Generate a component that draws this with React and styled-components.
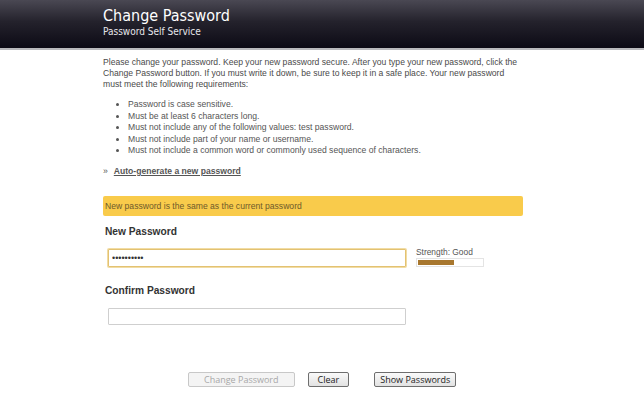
import React from 'react'
import styled, { createGlobalStyle } from 'styled-components'

const GlobalStyle = createGlobalStyle`
  html, body {
    margin: 0;
    padding: 0;
    background: #fff;
  }
  body {
    font-family: 'Liberation Sans', Arial, sans-serif;
  }
`

const Header = styled.header`
  height: 50px;
  background: linear-gradient(180deg, #4a4853 0%, #24222c 45%, #0c0a15 100%);
  border-bottom: 2px solid #b9b9bd;
  padding: 5px 0 0 103px;
  box-sizing: border-box;
  color: #fff;
`

const Title = styled.h1`
  margin: 0;
  font-family: 'DejaVu Sans Condensed', 'Open Sans', sans-serif;
  font-stretch: condensed;
  font-weight: normal;
  font-size: 16px;
  line-height: 21px;
`

const Subtitle = styled.div`
  font-family: 'DejaVu Sans Condensed', 'Open Sans', sans-serif;
  font-stretch: condensed;
  font-size: 10px;
  line-height: 12px;
  color: #e6e6ea;
`

const Main = styled.main`
  padding: 7px 0 0 103px;
  width: 525px;
  box-sizing: border-box;
  color: #4a4a4a;
  font-size: 8.6px;
`

const Intro = styled.p`
  margin: 0;
  line-height: 11px;
  width: 420px;
`

const Rules = styled.ul`
  margin: 9px 0 0;
  padding-left: 25px;
  line-height: 11.6px;
  color: #555;
`

const AutoLink = styled.div`
  margin-top: 9px;
  font-weight: bold;
  color: #555;
  span {
    margin-right: 6px;
    font-weight: normal;
  }
  a {
    color: #555;
    text-decoration: underline;
  }
`

const Notice = styled.div`
  margin-top: 20px;
  width: 420px;
  height: 20px;
  box-sizing: border-box;
  background: #f9cb4b;
  border-radius: 2px;
  padding-left: 2px;
  line-height: 20px;
  color: #6e5a2a;
`

const Label = styled.div`
  margin: ${(p) => p.$top}px 0 0 2px;
  font-size: 10.2px;
  font-weight: bold;
  color: #333;
`

const FieldRow = styled.div`
  display: flex;
  align-items: flex-start;
  gap: 10px;
  margin: ${(p) => p.$top}px 0 0 5px;
`

const Input = styled.input`
  width: 298px;
  height: ${(p) => p.$h}px;
  box-sizing: border-box;
  border: 1px solid ${(p) => (p.$focus ? '#e3c272' : '#cfcfcf')};
  box-shadow: ${(p) => (p.$focus ? '0 0 0 1px #f1dca4' : 'none')};
  border-radius: 1px;
  padding: 0 3px;
  font-size: 9px;
  color: #333;
  background: #fff;
  outline: none;
`

const Strength = styled.div`
  display: flex;
  flex-direction: column;
  gap: 1px;
  margin-top: -2px;
  font-size: 8.4px;
  color: #555;
`

const Bar = styled.div`
  width: 68px;
  height: 9px;
  box-sizing: border-box;
  border: 1px solid #e4e4e4;
  background: #fff;
  padding: 1px;
  div {
    height: 100%;
    background: #a8772e;
  }
`

const Buttons = styled.div`
  display: flex;
  gap: 13px;
  margin: 47px 0 0 85px;
`

const Button = styled.button`
  height: 15px;
  padding: 0 ${(p) => p.$pad}px;
  font-family: 'Open Sans', 'DejaVu Sans', sans-serif;
  font-size: 9px;
  line-height: 13px;
  color: ${(p) => (p.disabled ? '#a8a8a8' : '#222')};
  background: ${(p) =>
    p.disabled ? '#f4f4f4' : 'linear-gradient(180deg, #fafafa 0%, #e2e2e2 100%)'};
  border: 1px solid ${(p) => (p.disabled ? '#c8c8c8' : '#6e6e6e')};
  border-radius: 2px;
  margin-left: ${(p) => p.$gap || 0}px;
`

const rules = [
  'Password is case sensitive.',
  'Must be at least 6 characters long.',
  'Must not include any of the following values: test password.',
  'Must not include part of your name or username.',
  'Must not include a common word or commonly used sequence of characters.',
]

const App = () => {
  return (
    <>
      <GlobalStyle />
      <Header>
        <Title>Change Password</Title>
        <Subtitle>Password Self Service</Subtitle>
      </Header>
      <Main>
        <Intro>
          Please change your password. Keep your new password secure. After you type your new
          password, click the Change Password button. If you must write it down, be sure to keep
          it in a safe place. Your new password must meet the following requirements:
        </Intro>
        <Rules>
          {rules.map((r) => (
            <li key={r}>{r}</li>
          ))}
        </Rules>
        <AutoLink>
          <span>»</span>
          <a href='#'>Auto-generate a new password</a>
        </AutoLink>
        <Notice>New password is the same as the current password</Notice>

        {/* new password */}
        <Label $top={10}>New Password</Label>
        <FieldRow $top={12}>
          <Input type='password' defaultValue='password12' $focus $h={18} />
          <Strength>
            <span>Strength: Good</span>
            <Bar>
              <div style={{ width: '56%' }} />
            </Bar>
          </Strength>
        </FieldRow>

        {/* confirm password */}
        <Label $top={18}>Confirm Password</Label>
        <FieldRow $top={12}>
          <Input type='password' $h={17} />
        </FieldRow>

        <Buttons>
          <Button disabled $pad={15}>
            Change Password
          </Button>
          <Button $pad={9}>Clear</Button>
          <Button $pad={5} $gap={12}>
            Show Passwords
          </Button>
        </Buttons>
      </Main>
    </>
  )
}

export default App
